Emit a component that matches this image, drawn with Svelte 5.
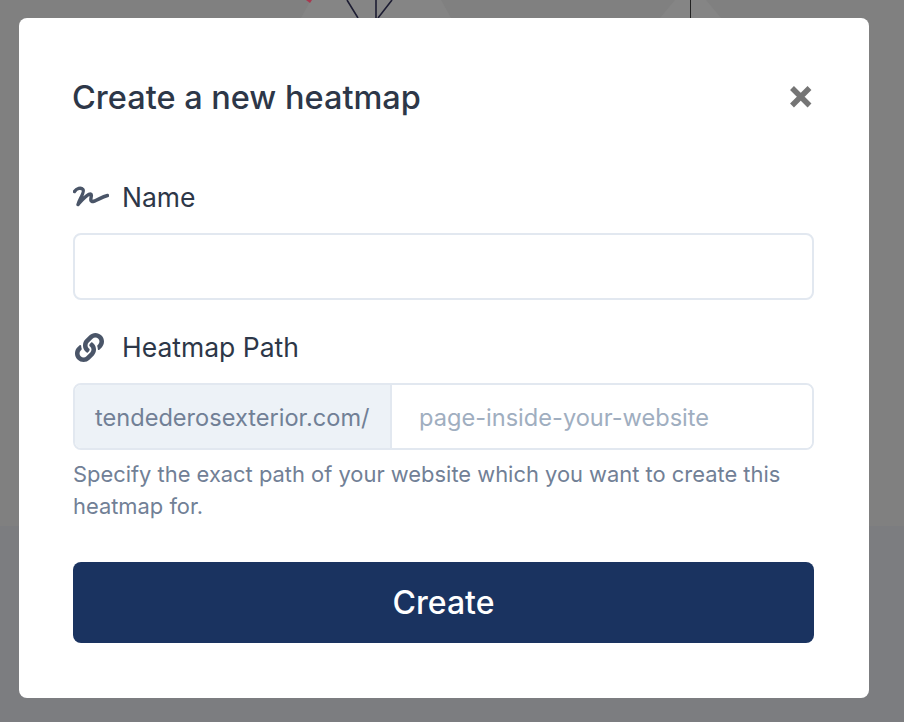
<script>
  let name = $state('');
  let path = $state('');
</script>

<div class="page">
  <div class="backdrop">
    <svg class="art" width="904" height="18" viewBox="0 0 904 18">
      <path d="M301 18 L311 0 H441 L451 18 Z" fill="#858585" />
      <path d="M660 18 L675 0 H706 L721 18 Z" fill="#858585" />
      <path d="M306 0 L310 3 L312 0 Z" fill="#a8384f" />
      <path d="M347 0 L358 18 M376 0 L376 18 M392 0 L378 18" stroke="#1d1d33" stroke-width="1.6" fill="none" />
      <path d="M690.500 0 V18" stroke="#222" stroke-width="1" />
    </svg>
    <div class="lower"></div>
  </div>

  <div class="modal">
    <header>
      <h2>Create a new heatmap</h2>
      <button class="close" aria-label="Close">
        <svg width="26" height="26" viewBox="0 0 26 26">
          <path d="M4 4 L21.500 21.500 M21.500 4 L4 21.500" stroke="#757575" stroke-width="5.500" />
        </svg>
      </button>
    </header>

    <label for="name">
      <svg width="36" height="24" viewBox="0 0 36 24" fill="none">
        <path d="M1.500 6.500 C3.500 3.500 8 2 10 4.500 C12 7 6 15 5 19.500 C9 15 14 9 17.500 9 C20 9 16 16 19 16.500 C22 17 28 12 34.500 10.500" stroke="#4a5568" stroke-width="3.400" stroke-linecap="round" stroke-linejoin="round" />
      </svg>
      <span>Name</span>
    </label>
    <input id="name" class="field" type="text" bind:value={name} />

    <label for="path" class="second">
      <span class="link-slot">
        <svg width="29" height="29" viewBox="0 0 512 512">
          <path fill="#4a5568" d="M326.612 185.391c59.747 59.809 58.927 155.698.36 214.59-.11.12-.24.25-.36.37l-67.2 67.2c-59.27 59.27-155.699 59.262-214.96 0-59.27-59.26-59.27-155.7 0-214.96l37.106-37.106c9.84-9.84 26.786-3.3 27.294 10.606.648 17.722 3.826 35.527 9.69 52.721 1.986 5.822.567 12.262-3.783 16.612l-13.087 13.087c-28.026 28.026-28.905 73.66-1.155 101.96 28.024 28.579 74.086 28.749 102.325.51l67.2-67.19c28.191-28.191 28.073-73.757 0-101.83-3.701-3.694-7.429-6.564-10.341-8.569a16.037 16.037 0 0 1-6.947-12.606c-.396-10.567 3.348-21.456 11.698-29.806l21.054-21.055c5.521-5.521 14.182-6.199 20.584-1.731a152.482 152.482 0 0 1 20.522 17.197zM467.547 44.449c-59.261-59.262-155.69-59.27-214.96 0l-67.2 67.2c-.12.12-.25.25-.36.37-58.566 58.892-59.387 154.781.36 214.59a152.454 152.454 0 0 0 20.521 17.196c6.402 4.468 15.064 3.789 20.584-1.731l21.054-21.055c8.35-8.35 12.094-19.239 11.698-29.806a16.037 16.037 0 0 0-6.947-12.606c-2.912-2.005-6.64-4.875-10.341-8.569-28.073-28.073-28.191-73.639 0-101.83l67.2-67.19c28.239-28.239 74.3-28.069 102.325.51 27.75 28.3 26.872 73.934-1.155 101.96l-13.087 13.087c-4.35 4.35-5.769 10.79-3.783 16.612 5.864 17.194 9.042 34.999 9.69 52.721.509 13.906 17.454 20.446 27.294 10.606l37.106-37.106c59.271-59.259 59.271-155.699.001-214.959z" />
        </svg>
      </span>
      <span>Heatmap Path</span>
    </label>
    <div class="group">
      <span class="prefix">tendederosexterior.com/</span>
      <input id="path" type="text" placeholder="page-inside-your-website" bind:value={path} />
    </div>
    <p class="help">Specify the exact path of your website which you want to create this heatmap for.</p>

    <button class="create">Create</button>
  </div>
</div>

<style>
  :global(body) {
    margin: 0;
    font-family: Inter, "Liberation Sans", sans-serif;
  }

  .page {
    position: relative;
    width: 904px;
    height: 722px;
    overflow: hidden;
    padding: 18px 0 0 19px;
    box-sizing: border-box;
    background: #808080;
  }

  .backdrop {
    position: absolute;
    inset: 0;
  }

  .art {
    display: block;
  }

  .lower {
    position: absolute;
    left: 0;
    right: 0;
    top: 526px;
    bottom: 0;
    background: #7c7d80;
  }

  .modal {
    position: relative;
    width: 850px;
    height: 680px;
    box-sizing: border-box;
    padding: 52px 55px 0 54px;
    background: #fff;
    border-radius: 8px;
  }

  header {
    display: flex;
    align-items: center;
    justify-content: space-between;
    height: 54px;
    margin-bottom: 58px;
  }

  h2 {
    margin: 0 0 0 -1px;
    font-size: 32.500px;
    font-weight: 500;
    color: #2d3748;
  }

  .close {
    display: flex;
    padding: 0;
    margin-right: 0;
    border: 0;
    background: none;
  }

  label {
    display: flex;
    align-items: center;
    gap: 13px;
    height: 30px;
    margin-bottom: 21px;
    font-size: 26.500px;
    color: #2d3748;
  }

  label svg {
    flex: none;
  }

  .second {
    margin-top: 32px;
    margin-bottom: 21px;
  }

  .link-slot {
    display: flex;
    width: 34px;
    padding-left: 2px;
  }

  .field,
  .group {
    display: flex;
    width: 741px;
    height: 67px;
    box-sizing: border-box;
    border: 2px solid #e2e8f0;
    border-radius: 8px;
    background: #fff;
  }

  .group {
    overflow: hidden;
  }

  .prefix {
    display: flex;
    align-items: center;
    width: 317px;
    box-sizing: border-box;
    padding: 1px 0 0 20px;
    background: #edf2f7;
    border-right: 2px solid #e2e8f0;
    font-size: 23.600px;
    color: #718096;
    white-space: nowrap;
  }

  .group input {
    flex: 1;
    min-width: 0;
    border: 0;
    outline: 0;
    padding: 2px 26px 0 27px;
    font: inherit;
    font-size: 23.600px;
    color: #2d3748;
  }

  .group input::placeholder {
    color: #a0aec0;
    opacity: 1;
  }

  .help {
    margin: 8px 0 0;
    font-size: 21.900px;
    line-height: 32px;
    color: #718096;
  }

  .create {
    display: block;
    width: 741px;
    height: 81px;
    margin-top: 40px;
    border: 0;
    border-radius: 8px;
    background: #1a3360;
    color: #fff;
    font: inherit;
    font-size: 32px;
    font-weight: 500;
  }
</style>
